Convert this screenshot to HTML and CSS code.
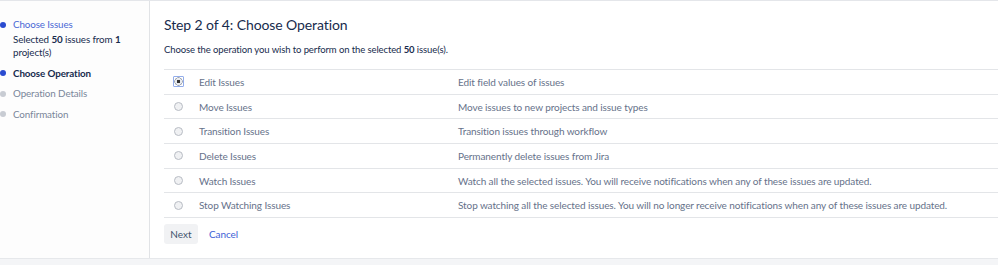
FILE: index.html
```html
<!DOCTYPE html>
<html lang="en">
<head>
    <meta charset="UTF-8">
    <title>Bulk Operation: Choose Operation</title>
    <link rel="stylesheet" href="styles.css">
</head>
<body>
    <div class="page">
        <!-- Steps sidebar -->
        <div class="steps">
            <ul>
                <li class="step done">
                    <a href="#">Choose Issues</a>
                    <div class="step-info">Selected <b>50</b> issues from <b>1</b> project(s)</div>
                </li>
                <li class="step current">Choose Operation</li>
                <li class="step">Operation Details</li>
                <li class="step">Confirmation</li>
            </ul>
        </div>

        <!-- Main content -->
        <div class="content">
            <h2>Step 2 of 4: Choose Operation</h2>
            <p class="intro">Choose the operation you wish to perform on the selected <b>50</b> issue(s).</p>

            <table class="ops">
                <tr>
                    <td class="radio"><input type="radio" name="op" checked></td>
                    <td class="name">Edit Issues</td>
                    <td class="desc">Edit field values of issues</td>
                </tr>
                <tr>
                    <td class="radio"><input type="radio" name="op"></td>
                    <td class="name">Move Issues</td>
                    <td class="desc">Move issues to new projects and issue types</td>
                </tr>
                <tr>
                    <td class="radio"><input type="radio" name="op"></td>
                    <td class="name">Transition Issues</td>
                    <td class="desc">Transition issues through workflow</td>
                </tr>
                <tr>
                    <td class="radio"><input type="radio" name="op"></td>
                    <td class="name">Delete Issues</td>
                    <td class="desc">Permanently delete issues from Jira</td>
                </tr>
                <tr>
                    <td class="radio"><input type="radio" name="op"></td>
                    <td class="name">Watch Issues</td>
                    <td class="desc">Watch all the selected issues. You will receive notifications when any of these issues are updated.</td>
                </tr>
                <tr>
                    <td class="radio"><input type="radio" name="op"></td>
                    <td class="name">Stop Watching Issues</td>
                    <td class="desc">Stop watching all the selected issues. You will no longer receive notifications when any of these issues are updated.</td>
                </tr>
            </table>

            <div class="buttons">
                <button>Next</button>
                <a href="#" class="cancel">Cancel</a>
            </div>
        </div>
    </div>
    <div class="footer"></div>
</body>
</html>
```

FILE: styles.css
```css
body {
    margin: 0;
    font-family: 'Lato', 'Noto Sans', sans-serif;
    font-size: 9.5px;
    letter-spacing: -0.1px;
    color: #172b4d;
    background: #fff;
}

.page {
    display: flex;
    height: 258px;
    border-top: 1px solid #e4e6ea;
    box-sizing: border-box;
}

.steps {
    width: 149px;
    flex-shrink: 0;
    background: #fdfdfd;
    border-right: 1px solid #e1e3e6;
    font-size: 9.8px;
}

.steps ul {
    list-style: none;
    margin: 0;
    padding: 17px 0 0 0;
}

.step {
    position: relative;
    padding-left: 13px;
    line-height: 13px;
    margin-bottom: 7.5px;
    color: #7a869a;
}

.step::before {
    content: '';
    position: absolute;
    left: 0;
    top: 3.5px;
    width: 6px;
    height: 6px;
    border-radius: 50%;
    background: #c8ccd3;
}

.step.done::before,
.step.current::before {
    background: #2a4bd0;
}

.step a {
    color: #4a68d6;
    text-decoration: none;
}

.step-info {
    color: #172b4d;
    margin-top: 2px;
}

.step.current {
    font-weight: bold;
    color: #172b4d;
}

.content {
    flex: 1;
    padding: 14px 0 0 14px;
}

h2 {
    margin: 0;
    font-size: 14px;
    font-weight: normal;
    line-height: 20px;
    color: #172b4d;
}

.intro {
    margin: 7.5px 0 13.5px 0;
    line-height: 13px;
}

.ops {
    width: 100%;
    border-collapse: collapse;
    border-top: 1px solid #e3e5e8;
    font-size: 10px;
}

.ops td {
    border-bottom: 1px solid #e3e5e8;
    height: 23.7px;
    padding: 0;
    color: #66728a;
    white-space: nowrap;
}

.ops td.radio {
    width: 25px;
    padding-left: 10px;
}

.ops td.name {
    width: 259px;
}

.ops input {
    -webkit-appearance: none;
    appearance: none;
    display: block;
    margin: 0;
    width: 9px;
    height: 9px;
    box-sizing: border-box;
    border: 1px solid #b8bcc4;
    border-radius: 50%;
    background: #f0f1f3;
}

/* focused + checked radio: square focus ring round the dot */
.ops input:checked {
    width: 11px;
    height: 11px;
    margin: 0 -1px;
    border: 1px solid #93adea;
    border-radius: 1px;
    background: radial-gradient(circle, #333 0, #333 1.4px, #e9ebee 2px, #e9ebee 3.2px, #a3a9b3 3.6px, #a3a9b3 4px, #fff 4.4px);
}

.buttons {
    display: flex;
    align-items: center;
    margin-top: 6px;
}

.buttons button {
    font-family: inherit;
    font-size: 10px;
    color: #42526e;
    background: #f1f2f4;
    border: none;
    border-radius: 3px;
    height: 20px;
    width: 34px;
    padding: 0;
}

.cancel {
    color: #3d5fd6;
    text-decoration: none;
    margin-left: 11px;
    font-size: 10px;
}

.footer {
    height: 7px;
    border-top: 1px solid #e6e8eb;
    background: #f4f5f7;
}
```
